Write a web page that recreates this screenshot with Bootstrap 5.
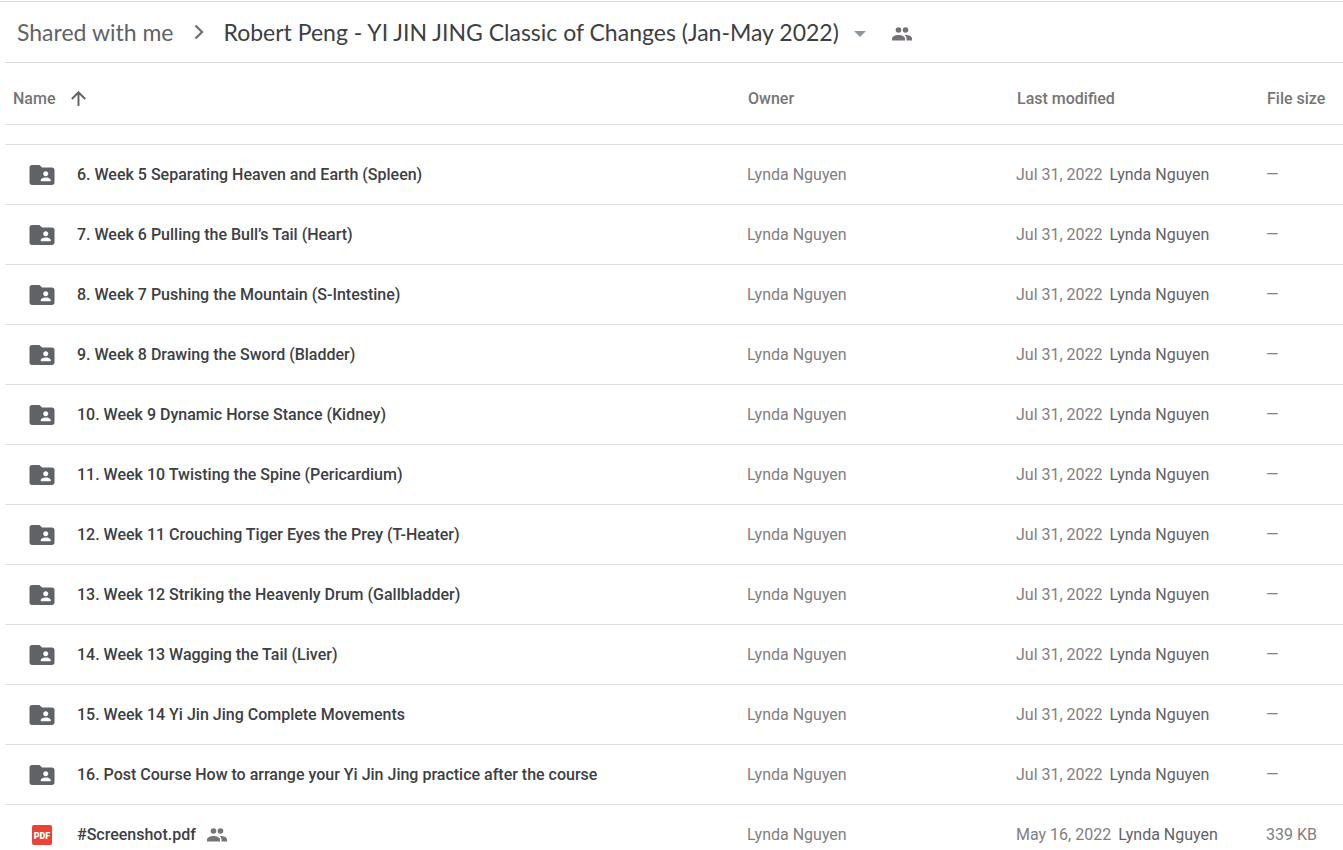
<!DOCTYPE html>
<html lang="en">
<head>
<meta charset="utf-8">
<meta name="viewport" content="width=device-width, initial-scale=1">
<title>Shared with me</title>
<link href="https://cdn.jsdelivr.net/npm/bootstrap@5.3.0/dist/css/bootstrap.min.css" rel="stylesheet">
<style>
  body { font-family: Roboto, "Liberation Sans", sans-serif; color: #3c4043; background: #fff; }
  .drive-pane { border-top: 1px solid #dadce0; margin-top: 1px; }
  .path-bar { height: 61px; margin-left: 5px; padding-left: 12px; border-bottom: 1px solid #dadce0; font-family: Lato, sans-serif; font-size: 23px; line-height: 28px; color: #3c4043; }
  .path-bar a { color: #5f6368; }
  .path-bar .people { margin: 4px 0 0 26px; color: #757075; }
  .path-menu { gap: 15px; color: #3c4043; font: inherit; }
  .files { table-layout: fixed; margin-left: 5px; width: calc(100% - 5px); font-size: 16px; line-height: 20px; white-space: nowrap; border-collapse: separate; border-spacing: 0; }
  .files th, .files td { padding: 0; vertical-align: middle; border-bottom: 1px solid #dadce0; }
  .files thead th { height: 62px; padding: 10px 0 0 2px; font-weight: 500; color: #757575; }
  .files thead th:first-child { padding-left: 8px; }
  .files tbody td, .files tbody th { height: 60px; font-weight: 400; color: #808080; }
  .files tbody th { font-weight: 500; }
  .files tbody .list-gap td { height: 20px; }
  .files tbody th a { color: #3c4043; }
  .files tbody td span { color: #5f6368; margin-left: 3px; }
  .files tbody td { padding-left: 1px; }
  .col-owner { width: 269px; }
  .col-modified { width: 250px; }
  .col-size { width: 78px; }
  .file-icon { width: 26px; margin: 1px 22px 0 24px; color: #5f6368; }
  .people { color: #757575; }
  .files .people { margin-left: 11px; }
</style>
<script src="https://cdn.jsdelivr.net/npm/bootstrap@5.3.0/dist/js/bootstrap.bundle.min.js"></script>
</head>
<body>
<svg class="d-none" aria-hidden="true">
  <symbol id="folder" viewBox="2 4 20 16"><path fill="currentColor" d="M20 6h-8l-2-2H4c-1.100 0-2 .9-2 2v12c0 1.100.9 2 2 2h16c1.100 0 2-.9 2-2V8c0-1.100-.9-2-2-2zm-5 3c1.100 0 2 .9 2 2s-.9 2-2 2-2-.9-2-2 .9-2 2-2zm4 8h-8v-1c0-1.330 2.670-2 4-2s4 .67 4 2v1z"/></symbol>
  <symbol id="people" viewBox="0 0 20 14"><g fill="currentColor"><circle cx="6.500" cy="3" r="2.800"/><circle cx="13.500" cy="3" r="2.800"/><path d="M0 13.500v-2C0 9.200 3.500 8 6.500 8S13 9.200 13 11.500v2zM14.500 13.500v-2c0-1.500-.8-2.600-2-3.500C16 7.800 20 8.900 20 11.500v2z"/></g></symbol>
</svg>
<main class="drive-pane vh-100 overflow-hidden">
  <nav class="path-bar d-flex align-items-center" aria-label="Folder path">
    <a href="#" class="text-decoration-none">Shared with me</a>
    <svg class="mx-3" width="18" height="18" viewBox="0 0 18 18" aria-hidden="true"><path d="M5.500 2.500l6.500 6.500-6.500 6.500" fill="none" stroke="#757075" stroke-width="2.400"/></svg>
    <button type="button" class="path-menu btn border-0 p-0 d-flex align-items-center">Robert Peng - YI JIN JING Classic of Changes (Jan-May 2022)
      <svg class="mt-1" width="12" height="6" viewBox="0 0 12 6" aria-hidden="true"><path d="M0 0h12L6 6z" fill="#8f979e"/></svg>
    </button>
    <svg class="people" width="20" height="14" role="img" aria-label="Shared"><use href="#people"/></svg>
  </nav>
  <table class="files">
    <colgroup><col><col class="col-owner"><col class="col-modified"><col class="col-size"></colgroup>
    <thead>
      <tr><th scope="col"><div class="d-flex align-items-center gap-3">Name
        <svg width="15" height="15" viewBox="0 0 15 15" aria-hidden="true"><path d="M7.500 15V1.500M.8 8l6.700-6.700L14.200 8" fill="none" stroke="#5f6368" stroke-width="1.900"/></svg></div></th>
        <th scope="col">Owner</th><th scope="col">Last modified</th><th scope="col">File size</th></tr>
    </thead>
    <tbody>
      <tr class="list-gap"><td colspan="4"></td></tr>
      <tr><th scope="row"><div class="d-flex align-items-center"><svg class="file-icon" height="20"><use href="#folder"/></svg><a href="#" class="text-decoration-none">6. Week 5 Separating Heaven and Earth (Spleen)</a></div></th><td>Lynda Nguyen</td><td>Jul 31, 2022 <span>Lynda Nguyen</span></td><td>—</td></tr>
      <tr><th scope="row"><div class="d-flex align-items-center"><svg class="file-icon" height="20"><use href="#folder"/></svg><a href="#" class="text-decoration-none">7. Week 6 Pulling the Bull’s Tail (Heart)</a></div></th><td>Lynda Nguyen</td><td>Jul 31, 2022 <span>Lynda Nguyen</span></td><td>—</td></tr>
      <tr><th scope="row"><div class="d-flex align-items-center"><svg class="file-icon" height="20"><use href="#folder"/></svg><a href="#" class="text-decoration-none">8. Week 7 Pushing the Mountain (S-Intestine)</a></div></th><td>Lynda Nguyen</td><td>Jul 31, 2022 <span>Lynda Nguyen</span></td><td>—</td></tr>
      <tr><th scope="row"><div class="d-flex align-items-center"><svg class="file-icon" height="20"><use href="#folder"/></svg><a href="#" class="text-decoration-none">9. Week 8 Drawing the Sword (Bladder)</a></div></th><td>Lynda Nguyen</td><td>Jul 31, 2022 <span>Lynda Nguyen</span></td><td>—</td></tr>
      <tr><th scope="row"><div class="d-flex align-items-center"><svg class="file-icon" height="20"><use href="#folder"/></svg><a href="#" class="text-decoration-none">10. Week 9 Dynamic Horse Stance (Kidney)</a></div></th><td>Lynda Nguyen</td><td>Jul 31, 2022 <span>Lynda Nguyen</span></td><td>—</td></tr>
      <tr><th scope="row"><div class="d-flex align-items-center"><svg class="file-icon" height="20"><use href="#folder"/></svg><a href="#" class="text-decoration-none">11. Week 10 Twisting the Spine (Pericardium)</a></div></th><td>Lynda Nguyen</td><td>Jul 31, 2022 <span>Lynda Nguyen</span></td><td>—</td></tr>
      <tr><th scope="row"><div class="d-flex align-items-center"><svg class="file-icon" height="20"><use href="#folder"/></svg><a href="#" class="text-decoration-none">12. Week 11 Crouching Tiger Eyes the Prey (T-Heater)</a></div></th><td>Lynda Nguyen</td><td>Jul 31, 2022 <span>Lynda Nguyen</span></td><td>—</td></tr>
      <tr><th scope="row"><div class="d-flex align-items-center"><svg class="file-icon" height="20"><use href="#folder"/></svg><a href="#" class="text-decoration-none">13. Week 12 Striking the Heavenly Drum (Gallbladder)</a></div></th><td>Lynda Nguyen</td><td>Jul 31, 2022 <span>Lynda Nguyen</span></td><td>—</td></tr>
      <tr><th scope="row"><div class="d-flex align-items-center"><svg class="file-icon" height="20"><use href="#folder"/></svg><a href="#" class="text-decoration-none">14. Week 13 Wagging the Tail (Liver)</a></div></th><td>Lynda Nguyen</td><td>Jul 31, 2022 <span>Lynda Nguyen</span></td><td>—</td></tr>
      <tr><th scope="row"><div class="d-flex align-items-center"><svg class="file-icon" height="20"><use href="#folder"/></svg><a href="#" class="text-decoration-none">15. Week 14 Yi Jin Jing Complete Movements</a></div></th><td>Lynda Nguyen</td><td>Jul 31, 2022 <span>Lynda Nguyen</span></td><td>—</td></tr>
      <tr><th scope="row"><div class="d-flex align-items-center"><svg class="file-icon" height="20"><use href="#folder"/></svg><a href="#" class="text-decoration-none">16. Post Course How to arrange your Yi Jin Jing practice after the course</a></div></th><td>Lynda Nguyen</td><td>Jul 31, 2022 <span>Lynda Nguyen</span></td><td>—</td></tr>
      <tr><th scope="row"><div class="d-flex align-items-center"><svg class="file-icon" height="20" viewBox="0 0 26 20"><rect x="3" width="20" height="20" rx="2" fill="#ea4335"/><text x="13" y="14" text-anchor="middle" font-family="Roboto" font-weight="900" font-size="9" fill="#fff">PDF</text></svg><a href="#" class="text-decoration-none">#Screenshot.pdf</a><svg class="people" width="20" height="14" role="img" aria-label="Shared"><use href="#people"/></svg></div></th><td>Lynda Nguyen</td><td>May 16, 2022 <span>Lynda Nguyen</span></td><td>339 KB</td></tr>
    </tbody>
  </table>
</main>
</body>
</html>
